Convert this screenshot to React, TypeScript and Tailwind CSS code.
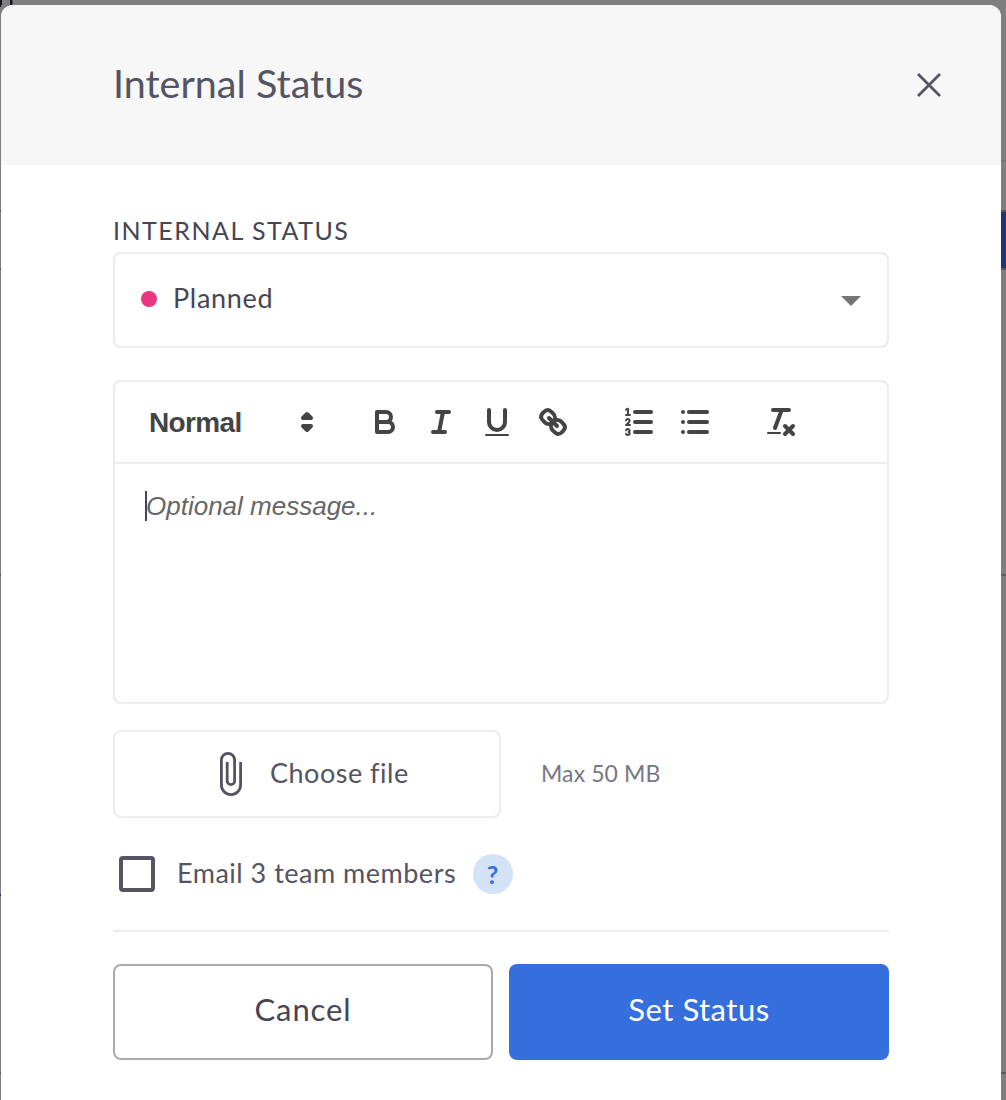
import type { ReactNode } from 'react';

interface ToolbarIconProps {
  label: string;
  className?: string;
  children: ReactNode;
}

function ToolbarIcon({ label, className = '', children }: ToolbarIconProps) {
  return (
    <button aria-label={label} className={`flex h-12 w-14 items-center justify-center ${className}`}>
      <svg
        viewBox="0 0 18 18"
        className="size-9 fill-none stroke-[#444] stroke-2"
        strokeLinecap="round"
        strokeLinejoin="round"
      >
        {children}
      </svg>
    </button>
  );
}

function Toolbar() {
  return (
    <div className="flex h-[82px] items-center border-b-2 border-[#ebebf1]">
      <button className="ml-[34px] flex w-[180px] items-center justify-between text-[#444]">
        <span className="pt-0.5 font-['Liberation_Sans',sans-serif] text-[28px] leading-9 font-bold tracking-[-0.65px]">
          Normal
        </span>
        <svg
          viewBox="0 0 18 18"
          className="mr-1 size-9 fill-none stroke-[#444] stroke-2"
          strokeLinecap="round"
          strokeLinejoin="round"
        >
          <polygon points="7 11 9 13 11 11 7 11" />
          <polygon points="7 7 9 5 11 7 7 7" />
        </svg>
      </button>
      <ToolbarIcon label="Bold" className="ml-7">
        <path d="M5,4H9.5a2.5,2.5,0,0,1,0,5H5Z" />
        <path d="M5,9h5.5a2.5,2.5,0,0,1,0,5H5Z" />
      </ToolbarIcon>
      <ToolbarIcon label="Italic">
        <line x1="7" x2="13" y1="4" y2="4" />
        <line x1="5" x2="11" y1="14" y2="14" />
        <line x1="8" x2="10" y1="14" y2="4" />
      </ToolbarIcon>
      <ToolbarIcon label="Underline">
        <path d="M5,3V9a4,4,0,0,0,8,0V3" />
        <rect x="3" y="15" width="12" height="1" rx="0.5" className="fill-[#444] stroke-none" />
      </ToolbarIcon>
      <ToolbarIcon label="Link">
        <line x1="7" x2="11" y1="7" y2="11" />
        <path d="M8.9,4.577a3.476,3.476,0,0,1,.36,4.679A3.476,3.476,0,0,1,4.577,8.9C3.185,7.5,2.035,6.4,4.217,4.217S7.5,3.185,8.9,4.577Z" />
        <path d="M13.423,9.1a3.476,3.476,0,0,0-4.679-.36,3.476,3.476,0,0,0,.36,4.679c1.392,1.392,2.5,2.542,4.679.36S14.815,10.5,13.423,9.1Z" />
      </ToolbarIcon>
      <ToolbarIcon label="Ordered list" className="ml-[30px]">
        <line x1="7" x2="15" y1="4" y2="4" />
        <line x1="7" x2="15" y1="9" y2="9" />
        <line x1="7" x2="15" y1="14" y2="14" />
        <g className="stroke-1">
          <path d="M2.5,5.5h2M2.5,2.8L3.5,2.4V5.5" />
          <path d="M4.5,10.5h-2c0-.234,1.85-1.076,1.85-2.234A0.959,0.959,0,0,0,2.5,8.156" />
          <path d="M2.5,14.846a0.959,0.959,0,0,0,1.85-.109A0.7,0.7,0,0,0,3.75,14a0.688,0.688,0,0,0,.6-0.736,0.959,0.959,0,0,0-1.85-.109" />
        </g>
      </ToolbarIcon>
      <ToolbarIcon label="Bullet list">
        <line x1="6" x2="15" y1="4" y2="4" />
        <line x1="6" x2="15" y1="9" y2="9" />
        <line x1="6" x2="15" y1="14" y2="14" />
        <line x1="3" x2="3" y1="4" y2="4" />
        <line x1="3" x2="3" y1="9" y2="9" />
        <line x1="3" x2="3" y1="14" y2="14" />
      </ToolbarIcon>
      <ToolbarIcon label="Clear formatting" className="ml-[30px]">
        <line x1="5" x2="13" y1="3" y2="3" />
        <line x1="6" x2="9.35" y1="12" y2="3" />
        <line x1="11" x2="15" y1="11" y2="15" />
        <line x1="15" x2="11" y1="11" y2="15" />
        <rect x="2" y="14" width="7" height="1" rx="0.5" className="fill-[#444] stroke-none" />
      </ToolbarIcon>
    </div>
  );
}

function StatusModal() {
  return (
    <div className="h-[1107px] w-[1000px] shrink-0 overflow-hidden rounded-xl bg-white">
      <header className="flex h-40 items-center justify-between bg-[#f7f7f7] pr-[60px] pl-28">
        <h1 className="pb-[5px] text-[39.5px] leading-12 text-[#545462]">Internal Status</h1>
        <button aria-label="Close">
          <svg viewBox="0 0 24 24" className="size-6 fill-none stroke-[#545462] stroke-[2.8]">
            <path d="M1 1L23 23M23 1L1 23" />
          </svg>
        </button>
      </header>
      <main className="px-28 pt-[47px]">
        <p className="h-10 text-[25px] leading-[36px] tracking-[1.5px] text-[#454554]">INTERNAL STATUS</p>
        <div className="flex h-24 items-center rounded-lg border-2 border-[#ebebf1] px-[26px]">
          <span className="mb-0.5 size-4 rounded-full bg-[#ea3580]" />
          <span className="ml-4 pb-1 text-[27px] leading-9 tracking-[0.7px] text-[#454554]">Planned</span>
          <svg viewBox="0 0 20 10" className="mt-0.5 ml-auto h-2.5 w-5 fill-[#757575]">
            <path d="M0 0H20L10 10Z" />
          </svg>
        </div>
        <div className="mt-8 h-[324px] rounded-lg border-2 border-[#ebebf1]">
          <Toolbar />
          <div className="flex items-center pt-[27px] pl-[30px]">
            <span className="h-[30px] w-0.5 bg-[#454560]" />
            <span className="-ml-px font-['Liberation_Sans',sans-serif] text-[26px] leading-[30px] text-[#666] italic">
              Optional message...
            </span>
          </div>
        </div>
        <div className="mt-[26px] flex items-center">
          <button className="flex h-[88px] w-[388px] items-center rounded-lg border-2 border-[#ebebf1] pl-[104px] text-[#545462]">
            <svg viewBox="0 0 24 44" className="h-11 w-6 fill-none stroke-[#545462] stroke-[2.8]">
              <path d="M8.2 10V28.9a3.7 3.7 0 0 0 7.4 0V8a6.6 6.6 0 0 0-13.2 0V33a9.6 9.6 0 0 0 19.2 0V10" />
            </svg>
            <span className="ml-[27px] pb-[3px] text-[27px] leading-9 tracking-[0.5px]">Choose file</span>
          </button>
          <span className="ml-10 pb-[3px] text-[23px] leading-8 tracking-[0.1px] text-[#777784]">Max 50 MB</span>
        </div>
        <div className="mt-9 flex h-10 items-center pl-1.5">
          <span className="size-9 rounded border-4 border-[#545462]" />
          <span className="ml-[22px] w-[280px] pb-[3px] text-[27px] leading-9 tracking-[0.5px] whitespace-nowrap text-[#545462]">
            Email 3 team members
          </span>
          <span className="ml-4 flex size-10 items-center justify-center rounded-full bg-[#d4e2f8] pr-px text-[25px] leading-10 font-bold text-[#356fdd]">
            ?
          </span>
        </div>
        <hr className="mt-9 border-t-2 border-[#ebebf1]" />
        <div className="mt-8 grid grid-cols-2 gap-4 text-[31px]">
          <button className="h-24 rounded-lg border-2 border-[#a9a9b2] pb-[5px] tracking-[0.9px] text-[#454554]">
            Cancel
          </button>
          <button className="h-24 rounded-lg bg-[#356fdd] pb-[5px] tracking-[0.5px] text-white">Set Status</button>
        </div>
      </main>
    </div>
  );
}

// Slivers of the dimmed page that stay visible beside the modal.
function LeftEdge() {
  return (
    <div className="flex w-px shrink-0 flex-col">
      <div className="h-0.5 bg-[#10161c]" />
      <div className="mt-[203px] h-0.5 bg-[#555559]" />
      <div className="mt-14 h-0.5 bg-[#555559]" />
      <div className="mt-[304px] h-0.5 bg-[#555559]" />
      <div className="mt-[318px] h-0.5 bg-[#1c386e]" />
      <div className="mt-[176px] h-0.5 bg-[#555559]" />
    </div>
  );
}

function RightEdge() {
  return (
    <div className="flex w-[5px] shrink-0 flex-col">
      <div className="mt-[155px] h-0.5 bg-[#757576]" />
      <div className="mt-12 h-[60px] border-y-2 border-[#555559] bg-[#1c386e]" />
      <div className="mt-[304px] h-0.5 bg-[#5c5c5f]" />
      <div className="mt-[496px] h-0.5 bg-[#555559]" />
    </div>
  );
}

export default function App() {
  return (
    <div className="h-[1100px] w-[1006px] overflow-hidden bg-[#7f7f7f] font-[Lato,sans-serif]">
      <div className="flex h-[5px]">
        <div className="w-0.5 bg-[#10161c]" />
        <div className="ml-2 w-[3px] border-r border-[#555] bg-[#10161c]" />
      </div>
      <div className="flex">
        <LeftEdge />
        <StatusModal />
        <RightEdge />
      </div>
    </div>
  );
}
